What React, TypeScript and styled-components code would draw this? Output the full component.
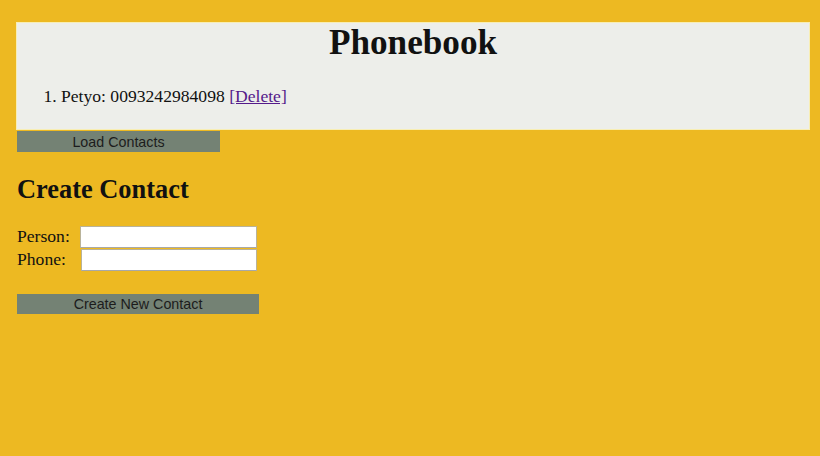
import React from 'react'
import styled, { createGlobalStyle } from 'styled-components'

const GlobalStyle = createGlobalStyle`
  html, body {
    margin: 0;
    padding: 0;
    background: #edb922;
  }
  body {
    font-family: "Liberation Serif", "Times New Roman", serif;
    font-size: 17.6px;
    color: #111;
  }
`

const Page = styled.div`
  padding: 23px 11px 0 17px;
`

const Board = styled.div`
  background: #edeeea;
  box-shadow: 0 0 0 1px #f8eeb4;
  height: 106px;
  box-sizing: border-box;
  padding-top: 1px;
`

const Title = styled.h1`
  margin: 0;
  font-size: 35.2px;
  line-height: 37px;
  text-align: center;
  font-weight: bold;
`

const ContactList = styled.ol`
  margin: 25px 0 0;
  padding-left: 44px;
  line-height: 20px;
`

const DeleteLink = styled.a`
  color: #551a8b;
  text-decoration: underline;
  cursor: pointer;
`

const ActionButton = styled.button<{ $width: number; $height: number }>`
  display: block;
  width: ${p => p.$width}px;
  height: ${p => p.$height}px;
  margin: 0;
  padding: 0;
  border: none;
  background: #748274;
  color: #1c1c1c;
  font-family: "Liberation Sans", Arial, sans-serif;
  font-size: 14.3px;
  cursor: pointer;
`

const LoadButton = styled(ActionButton)`
  margin-top: 2px;
`

const SubTitle = styled.h2`
  margin: 22px 0 0;
  font-size: 26.4px;
  line-height: 30px;
  font-weight: bold;
`

const Form = styled.form`
  margin-top: 21px;
`

const FieldRow = styled.div`
  display: flex;
  align-items: center;
  height: 23px;
`

const Label = styled.label<{ $gap: number }>`
  margin-right: ${p => p.$gap}px;
`

const Input = styled.input<{ $width: number }>`
  box-sizing: border-box;
  width: ${p => p.$width}px;
  height: 22px;
  margin: 0;
  background: #fff;
  border: 1px solid #b9b39a;
  border-bottom-color: #a8a8a8;
  font-family: "Liberation Sans", Arial, sans-serif;
  font-size: 13px;
`

const CreateButton = styled(ActionButton)`
  margin-top: 23px;
`

const App: React.FC = () => {
  return (
    <Page>
      <GlobalStyle />
      <Board>
        <Title>Phonebook</Title>
        <ContactList>
          <li>
            Petyo: 0093242984098 <DeleteLink>[Delete]</DeleteLink>
          </li>
        </ContactList>
      </Board>
      <LoadButton $width={203} $height={21}>Load Contacts</LoadButton>
      <SubTitle>Create Contact</SubTitle>
      <Form onSubmit={e => e.preventDefault()}>
        <FieldRow>
          <Label $gap={10}>Person:</Label>
          <Input type='text' $width={177} />
        </FieldRow>
        <FieldRow>
          <Label $gap={15}>Phone:</Label>
          <Input type='text' $width={176} />
        </FieldRow>
        <CreateButton type='button' $width={242} $height={20}>Create New Contact</CreateButton>
      </Form>
    </Page>
  )
}

export default App
